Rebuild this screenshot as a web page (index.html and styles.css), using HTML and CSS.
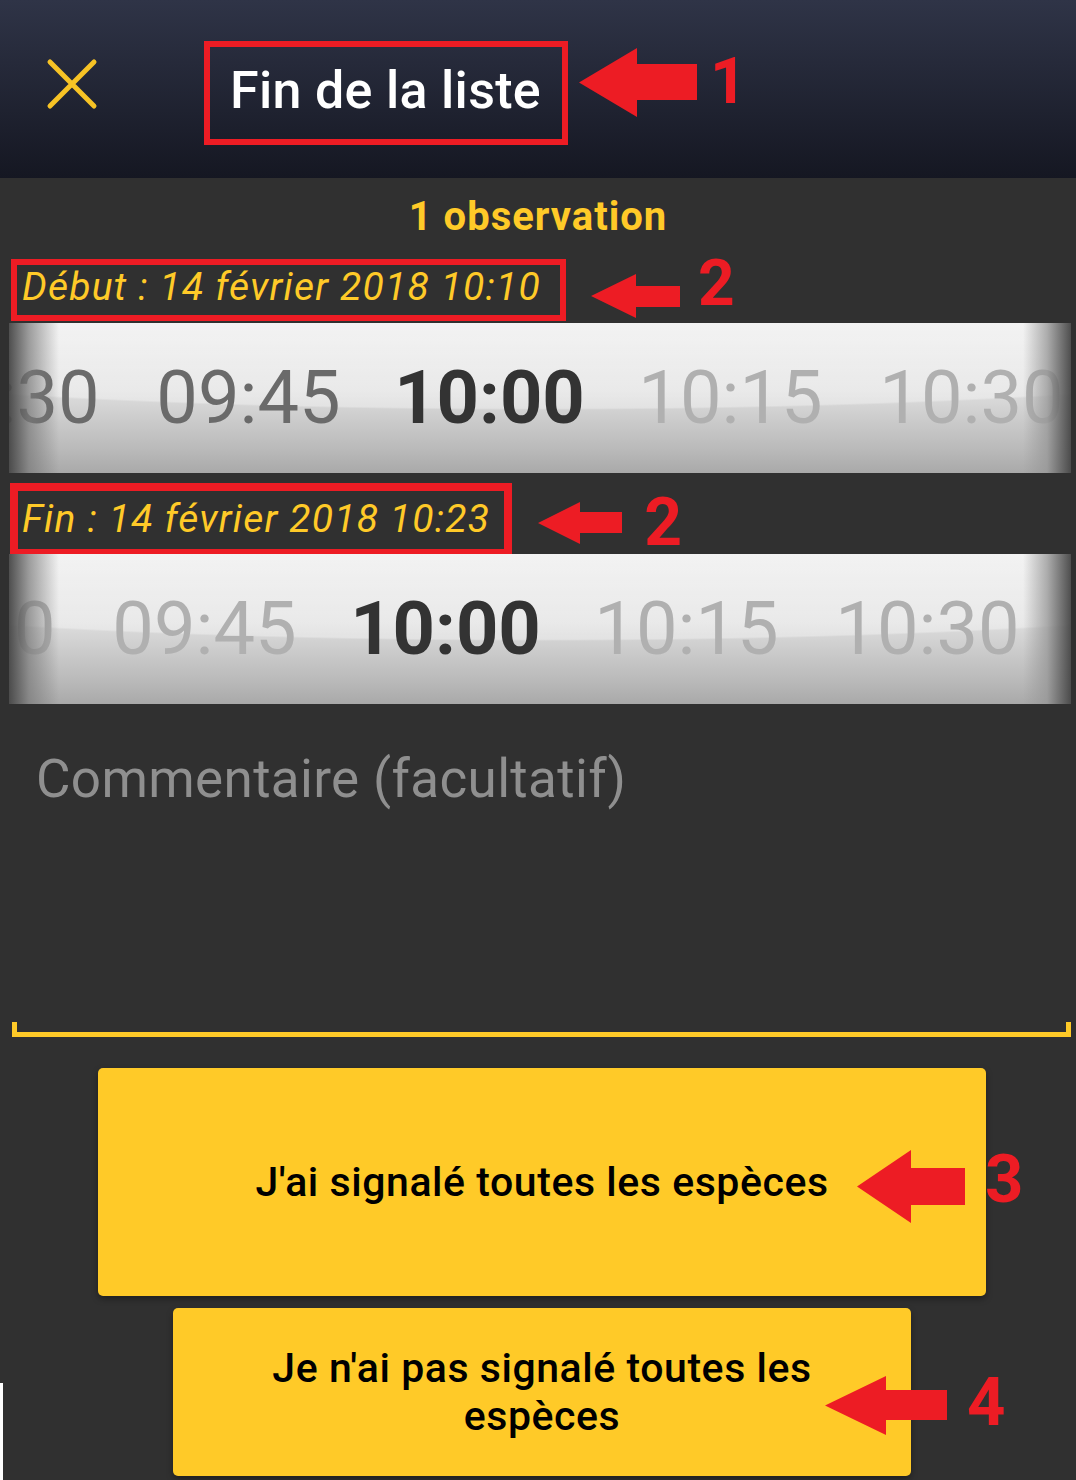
FILE: index.html
```html
<!DOCTYPE html>
<html lang="fr">
<head>
    <meta charset="UTF-8">
    <meta name="viewport" content="width=device-width, initial-scale=1.0">
    <title>Fin de la liste</title>
    <link rel="stylesheet" href="styles.css">
</head>
<body>
    <div class="app">
        <header class="topbar">
            <svg class="close" viewBox="0 0 52 52">
                <path d="M4 4 L48 48 M48 4 L4 48" stroke="#f7c325" stroke-width="5" stroke-linecap="round" fill="none"/>
            </svg>
            <div class="mark title-mark"><h1>Fin de la liste</h1></div>
            <svg class="arrow arrow-1" viewBox="0 0 118 69">
                <polygon points="0,34.5 58,0 58,16 118,16 118,52 58,52 58,69"/>
            </svg>
            <span class="num num-1">1</span>
        </header>

        <main class="content">
            <p class="count">1 observation</p>

            <div class="date-row row-start">
                <div class="mark date-mark"><span class="date">Début : 14 février 2018 10:10</span></div>
                <svg class="arrow arrow-2" viewBox="0 0 89 44">
                    <polygon points="0,22 45,0 45,12 89,12 89,33 45,33 45,44"/>
                </svg>
                <span class="num num-2">2</span>
            </div>
            <div class="picker">
                <div class="track">
                    <span class="near">09:30</span>
                    <span class="near">09:45</span>
                    <span class="current">10:00</span>
                    <span>10:15</span>
                    <span>10:30</span>
                </div>
            </div>

            <div class="date-row row-end">
                <div class="mark date-mark end-mark"><span class="date">Fin : 14 février 2018 10:23</span></div>
                <svg class="arrow arrow-2b" viewBox="0 0 84 42">
                    <polygon points="0,21 42,0 42,10 84,10 84,31 42,31 42,42"/>
                </svg>
                <span class="num num-2b">2</span>
            </div>
            <div class="picker picker-end">
                <div class="track">
                    <span>09:30</span>
                    <span>09:45</span>
                    <span class="current">10:00</span>
                    <span>10:15</span>
                    <span>10:30</span>
                </div>
            </div>

            <div class="comment">Commentaire (facultatif)</div>
            <div class="underline"></div>

            <button class="btn btn-all">
                J'ai signalé toutes les espèces
                <svg class="arrow arrow-3" viewBox="0 0 108 73">
                    <polygon points="0,36.5 54,0 54,18 108,18 108,55 54,55 54,73"/>
                </svg>
                <span class="num num-3">3</span>
            </button>
            <button class="btn btn-partial">
                Je n'ai pas signalé toutes les espèces
                <svg class="arrow arrow-4" viewBox="0 0 122 59">
                    <polygon points="0,29.5 61,0 61,14 122,14 122,44 61,44 61,59"/>
                </svg>
                <span class="num num-4">4</span>
            </button>
        </main>
        <div class="edge"></div>
    </div>
</body>
</html>
```

FILE: styles.css
```css
* {
    margin: 0;
    padding: 0;
    box-sizing: border-box;
}
body {
    background: #303030;
    font-family: Roboto, "Liberation Sans", sans-serif;
    width: 1076px;
    height: 1480px;
    overflow: hidden;
}
.app {
    position: relative;
    height: 1480px;
}
.topbar {
    height: 178px;
    background: linear-gradient(to bottom, #2f3447, #151722);
    display: flex;
    align-items: flex-start;
}
.close {
    width: 52px;
    height: 52px;
    margin: 58px 0 0 46px;
}
.mark {
    border: 6px solid #ed1c24;
}
.title-mark {
    margin: 41px 0 0 106px;
    width: 364px;
    height: 104px;
    padding: 0 0 4px 20px;
}
.title-mark h1 {
    font-size: 52px;
    font-weight: 500;
    line-height: 88px;
    letter-spacing: 0.3px;
    color: #fff;
    white-space: nowrap;
}
.arrow {
    fill: #ed1c24;
    display: block;
}
.arrow-1 {
    width: 118px;
    height: 69px;
    margin: 48px 0 0 11px;
}
.num {
    color: #ed1c24;
    font-weight: 700;
    font-size: 64px;
    line-height: 64px;
}
.num-1 {
    margin: 50px 0 0 13px;
}

.count {
    margin-top: 15px;
    text-align: center;
    font-size: 40px;
    font-weight: 700;
    line-height: 48px;
    letter-spacing: 1px;
    color: #ffca28;
}
.date-row {
    display: flex;
    align-items: flex-start;
}
.row-start {
    margin-top: 18px;
}
.date-mark {
    margin-left: 11px;
    padding: 0 19px 6px 5px;
}
.date {
    font-size: 39px;
    font-style: italic;
    line-height: 44px;
    letter-spacing: 1.2px;
    color: #ffca28;
    white-space: nowrap;
}
.arrow-2 {
    width: 89px;
    height: 44px;
    margin: 15px 0 0 25px;
}
.num-2 {
    margin: -7px 0 0 18px;
}
.row-end {
    margin-top: 10px;
    margin-bottom: -3px;
}
.end-mark {
    margin-left: 10px;
    border-width: 8px;
    padding: 6px 14px 8px 4px;
}
.arrow-2b {
    width: 84px;
    height: 42px;
    margin: 19px 0 0 26px;
}
.num-2b {
    font-size: 66px;
    line-height: 66px;
    margin: 7px 0 0 22px;
}

.picker {
    position: relative;
    margin: 2px 5px 0 9px;
    height: 150px;
    overflow: hidden;
    background:
        radial-gradient(ellipse 90% 58% at 50% 0%, rgba(255, 255, 255, 0.35) 98%, rgba(255, 255, 255, 0) 100%),
        linear-gradient(to bottom, #ececec 0%, #dedede 45%, #cbcbcb 65%, #b9b9b9 85%, #a9a9a9 100%);
}
.picker::after {
    content: "";
    position: absolute;
    inset: 0;
    background: linear-gradient(to right,
        rgba(70, 70, 70, 0.95) 0,
        rgba(120, 120, 120, 0.7) 20px,
        rgba(200, 200, 200, 0) 50px,
        rgba(200, 200, 200, 0) calc(100% - 48px),
        rgba(150, 150, 150, 0.75) calc(100% - 24px),
        rgba(70, 70, 70, 0.95) 100%);
}
.track {
    display: flex;
    margin-left: -122px;
}
.picker-end .track {
    margin-left: -166px;
}
.track span {
    flex: 0 0 241px;
    text-align: center;
    font-size: 74px;
    line-height: 150px;
    color: #b0b0b0;
}
.track .near {
    color: #6a6a6a;
}
.track .current {
    color: #333;
    font-weight: 700;
}
.picker-end {
    margin-top: 0;
}

.comment {
    margin-top: 43px;
    padding-left: 36px;
    font-size: 53px;
    line-height: 64px;
    letter-spacing: 0.35px;
    color: #8f8f8f;
}
.underline {
    margin: 211px 5px 0 12px;
    height: 15px;
    border: 5px solid #ffca28;
    border-top: 0;
}

.btn {
    position: relative;
    display: flex;
    align-items: center;
    justify-content: center;
    background: #ffca28;
    border: 0;
    border-radius: 5px;
    box-shadow: 0 3px 6px rgba(0, 0, 0, 0.35);
    font-family: Roboto, "Liberation Sans", sans-serif;
    font-size: 41px;
    font-weight: 500;
    line-height: 48px;
    letter-spacing: 0.55px;
    color: #000;
    text-align: center;
}
.btn-all {
    margin: 31px 0 0 98px;
    width: 888px;
    height: 228px;
}
.btn-partial {
    margin: 12px 0 0 173px;
    width: 738px;
    height: 168px;
    padding: 0 90px;
}
.btn .arrow,
.btn .num {
    position: absolute;
    letter-spacing: 0;
}
.arrow-3 {
    width: 108px;
    height: 73px;
    left: 759px;
    top: 82px;
}
.num-3 {
    font-size: 67px;
    line-height: 67px;
    left: 887px;
    top: 78px;
}
.arrow-4 {
    width: 122px;
    height: 59px;
    left: 652px;
    top: 68px;
}
.num-4 {
    font-size: 67px;
    line-height: 67px;
    left: 794px;
    top: 61px;
}
.edge {
    position: absolute;
    left: 0;
    top: 1383px;
    width: 3px;
    height: 97px;
    background: #fff;
}
```
